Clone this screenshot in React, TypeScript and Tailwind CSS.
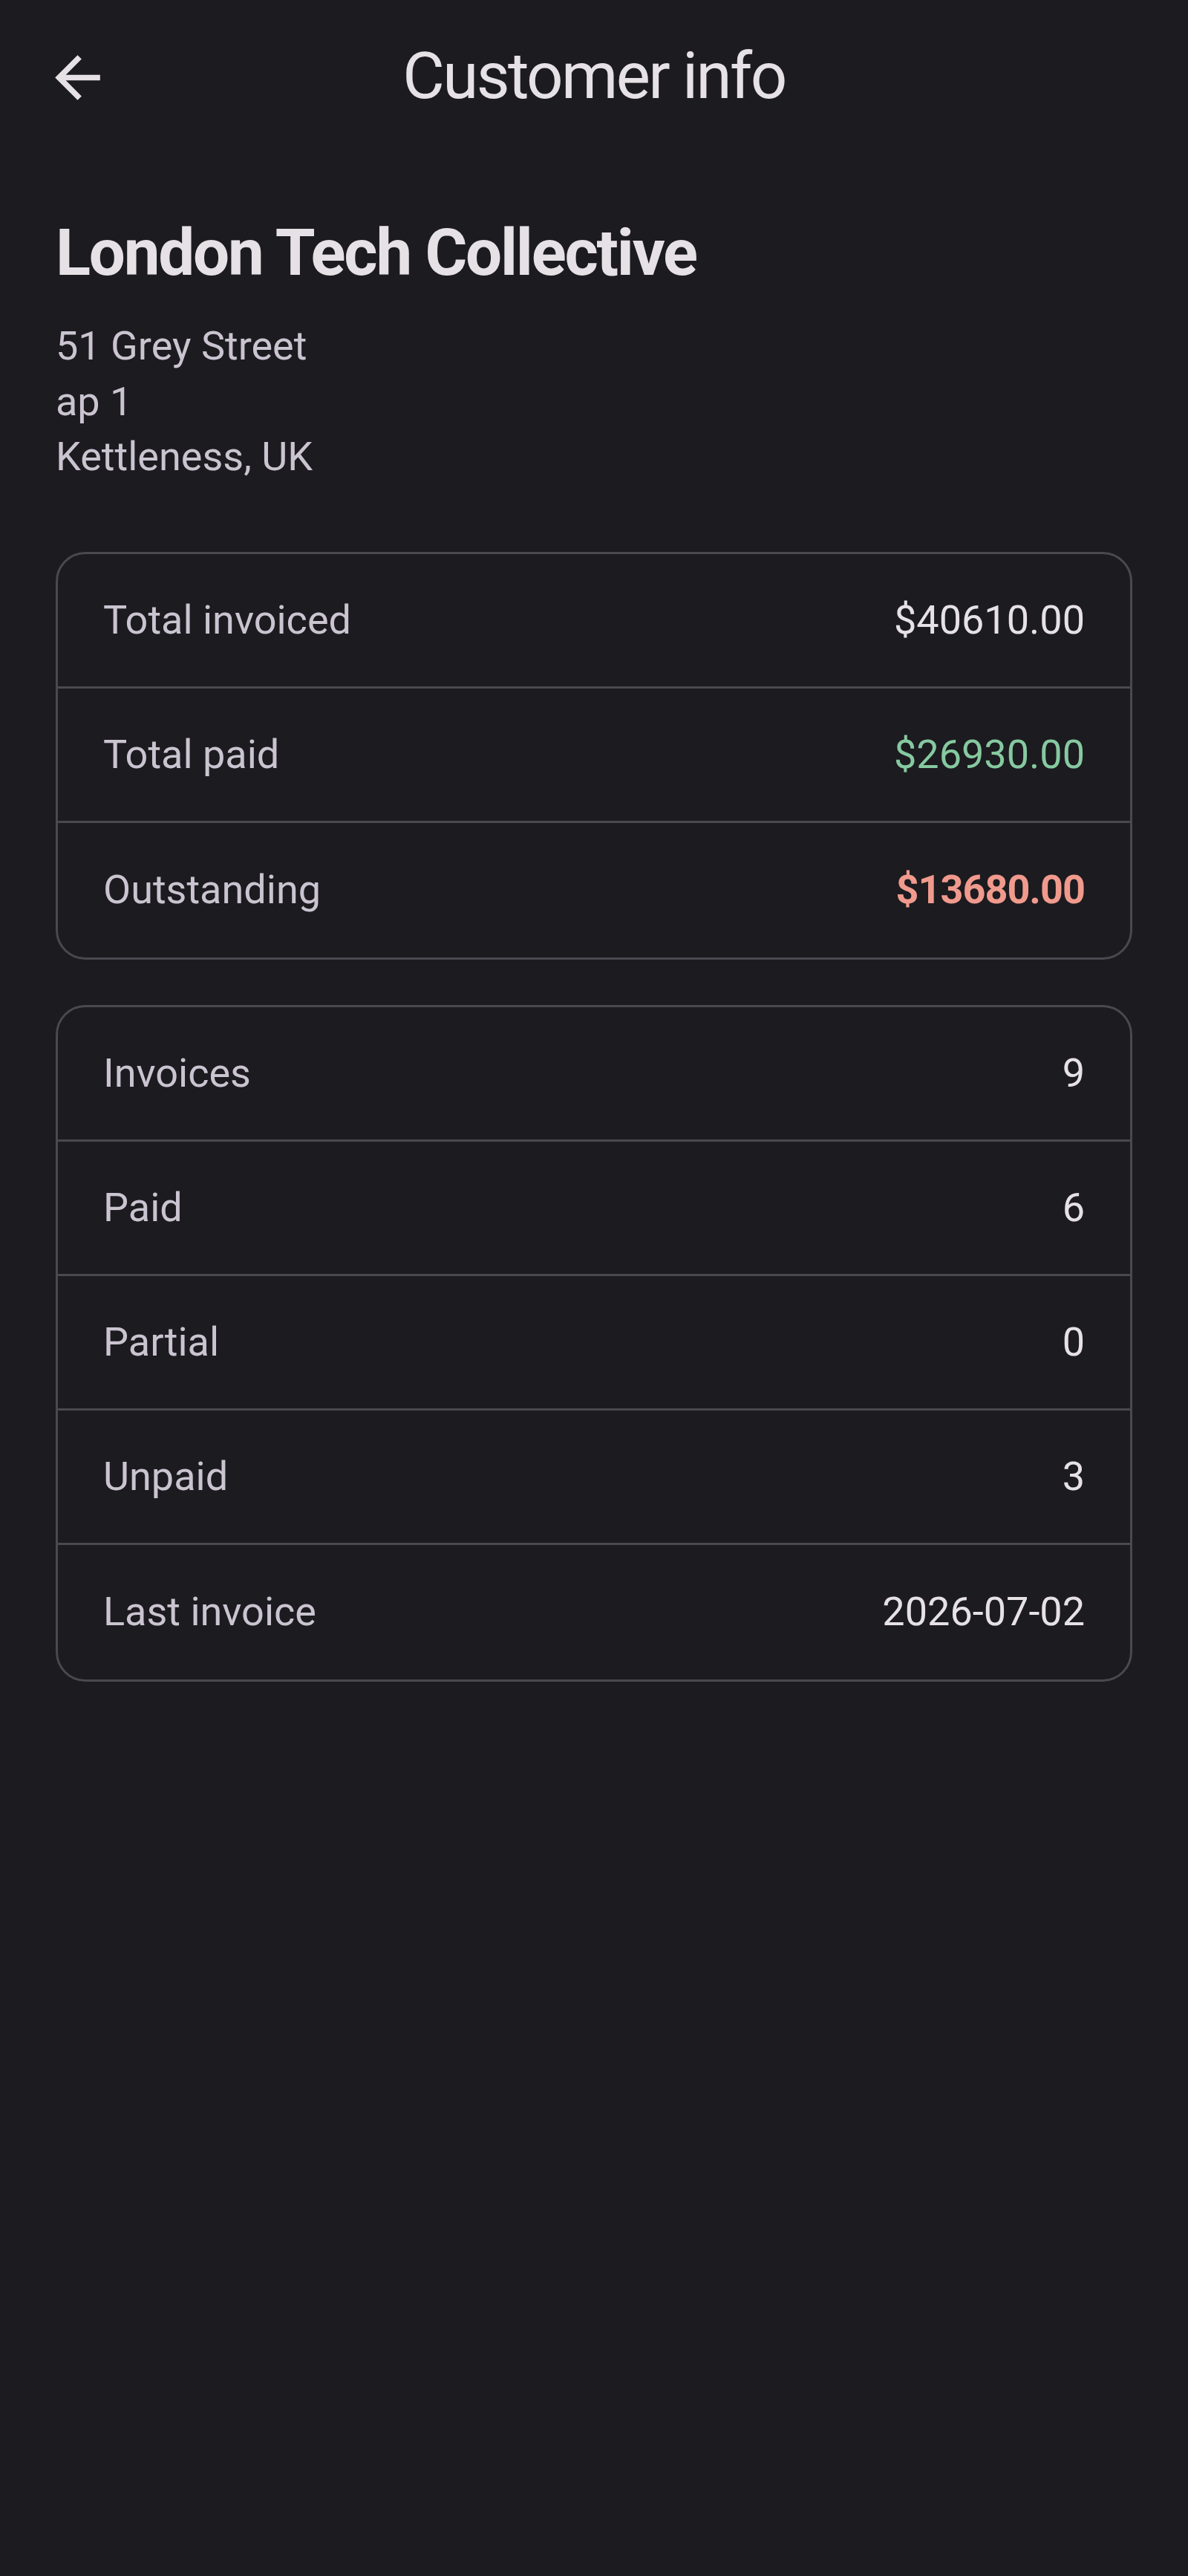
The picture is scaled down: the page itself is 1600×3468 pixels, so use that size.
import React from "react";

type Row = { label: string; value: string; cls?: string };

const money: Row[] = [
  { label: "Total invoiced", value: "$40610.00", cls: "text-[#e6e1e5]" },
  { label: "Total paid", value: "$26930.00", cls: "text-[#86c9a0]" },
  { label: "Outstanding", value: "$13680.00", cls: "text-[#f09a8d] font-bold tracking-[-1px]" },
];

const counts: Row[] = [
  { label: "Invoices", value: "9" },
  { label: "Paid", value: "6" },
  { label: "Partial", value: "0" },
  { label: "Unpaid", value: "3" },
  { label: "Last invoice", value: "2026-07-02" },
];

function Card({ rows }: { rows: Row[] }) {
  return (
    <div className="border-[3px] border-[#4a494f] rounded-[40px] overflow-hidden">
      {rows.map((r, i) => (
        <div
          key={r.label}
          className={
            "h-[181px] flex items-center justify-between px-[61px] " +
            (i < rows.length - 1 ? "border-b-[3px] border-[#4a494f]" : "")
          }
        >
          <span className="text-[54px] leading-[64px] text-[#cac4d0]">{r.label}</span>
          <span className={"text-[54px] leading-[64px] " + (r.cls ?? "text-[#e6e1e5]")}>{r.value}</span>
        </div>
      ))}
    </div>
  );
}

export default function App() {
  return (
    <div
      className="min-h-[3468px] w-full bg-[#1c1b20] text-[#e6e1e5]"
      style={{ fontFamily: "Roboto, 'Noto Sans', sans-serif" }}
    >
      <header className="h-[204px] grid grid-cols-[1fr_auto_1fr] items-center">
        <div className="pl-[59px] flex items-center">
          <svg width="91" height="91" viewBox="0 0 24 24" fill="#e6e1e5" className="mt-1">
            <path d="M20 11H7.83l5.59-5.59L12 4l-8 8 8 8 1.41-1.41L7.83 13H20v-2z" />
          </svg>
        </div>
        <h1 className="text-[87px] leading-[104px] tracking-[-2.6px] font-normal text-[#e6e1e5]">
          Customer info
        </h1>
        <div />
      </header>

      <main className="px-[75px]">
        <h2 className="mt-[84px] text-[87px] leading-[104px] tracking-[-2.2px] font-bold text-[#e6e1e5]">
          London Tech Collective
        </h2>
        <div className="mt-[37px] text-[54px] leading-[74.5px] text-[#cac4d0]">
          <div>51 Grey Street</div>
          <div>ap 1</div>
          <div>Kettleness, UK</div>
        </div>

        <div className="mt-[90px]">
          <Card rows={money} />
        </div>
        <div className="mt-[61px]">
          <Card rows={counts} />
        </div>
      </main>
    </div>
  );
}
